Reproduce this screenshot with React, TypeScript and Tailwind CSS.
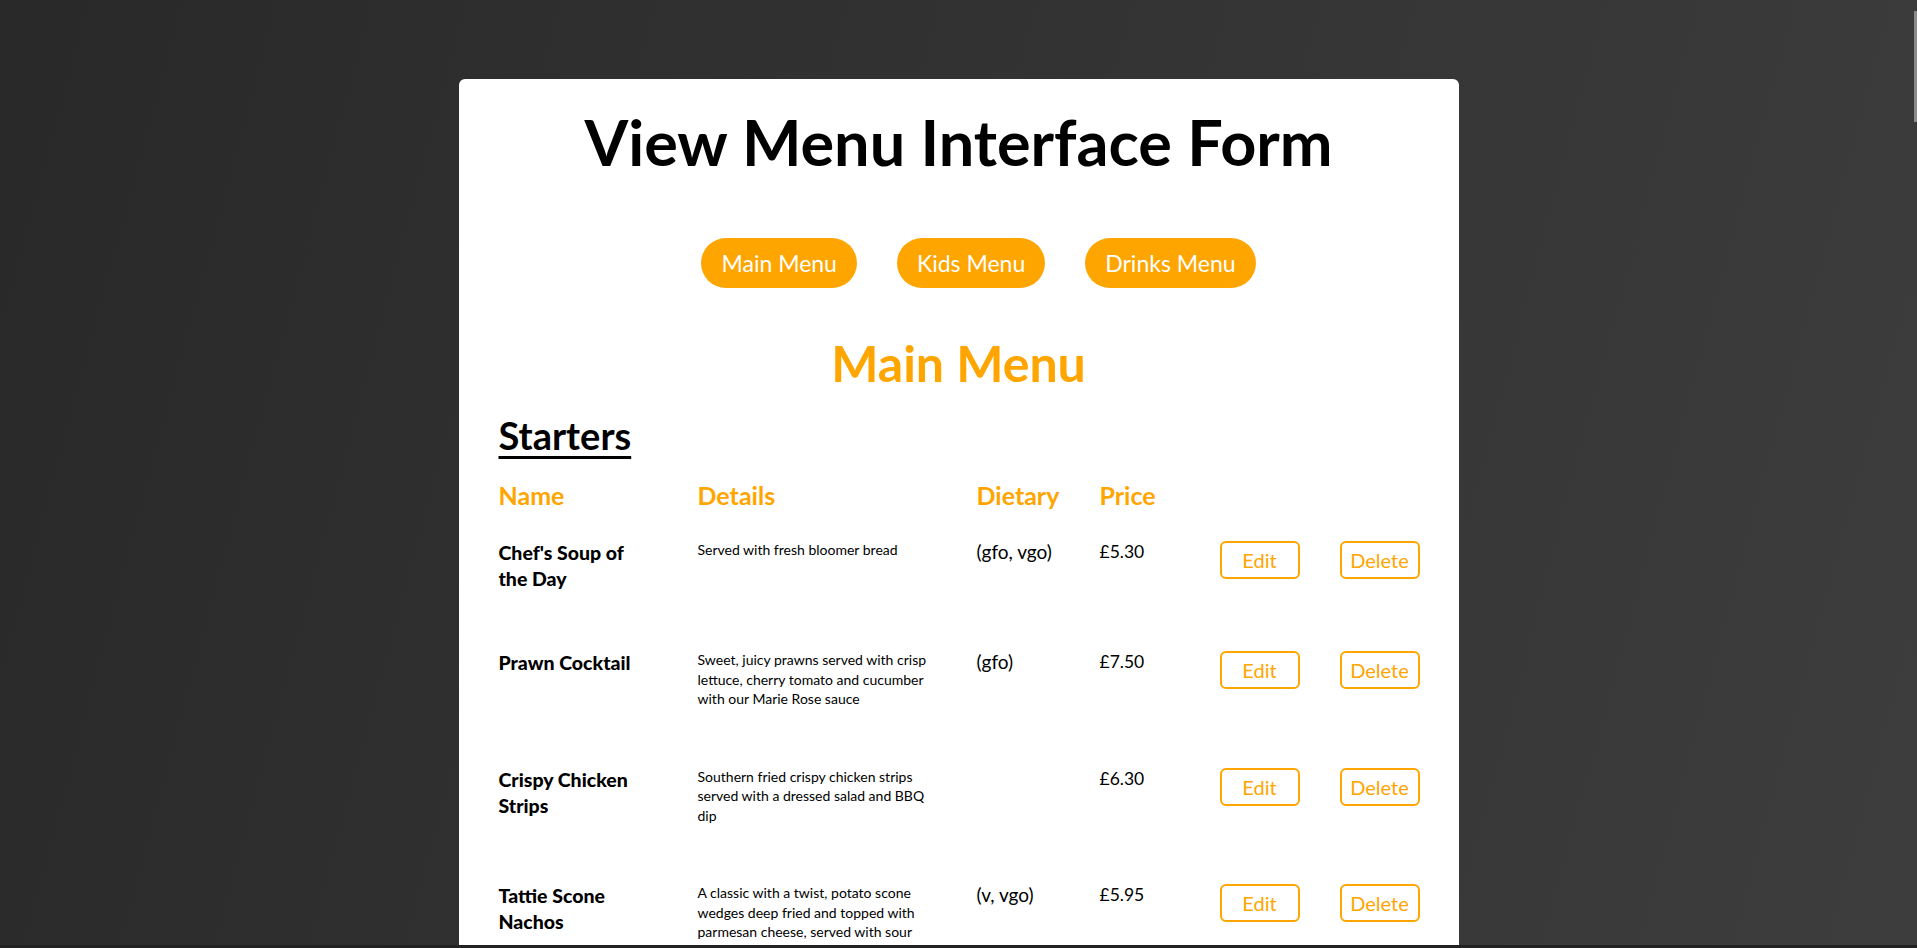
import React from 'react';

interface IMenuItem {
  name: string;
  details: string;
  dietary: string;
  price: string;
}

const starters: IMenuItem[] = [
  { name: "Chef's Soup of the Day", details: 'Served with fresh bloomer bread', dietary: '(gfo, vgo)', price: '£5.30' },
  {
    name: 'Prawn Cocktail',
    details: 'Sweet, juicy prawns served with crisp lettuce, cherry tomato and cucumber with our Marie Rose sauce',
    dietary: '(gfo)',
    price: '£7.50',
  },
  {
    name: 'Crispy Chicken Strips',
    details: 'Southern fried crispy chicken strips served with a dressed salad and BBQ dip',
    dietary: '',
    price: '£6.30',
  },
  {
    name: 'Tattie Scone Nachos',
    details: 'A classic with a twist, potato scone wedges deep fried and topped with parmesan cheese, served with sour cream and salsa',
    dietary: '(v, vgo)',
    price: '£5.95',
  },
];

const menus = ['Main Menu', 'Kids Menu', 'Drinks Menu'];

const App: React.FC = () => {
  return (
    <div className="relative h-screen overflow-hidden bg-[linear-gradient(105deg,#292929_0%,#333333_50%,#3d3d3d_100%)] font-['Lato',sans-serif]">
      <div className="mx-auto mt-[79px] w-[1000px] rounded-[6px] bg-white px-10 pt-[31px] pb-10">
        <h1 className="text-center text-[63px] font-bold leading-none text-black">View Menu Interface Form</h1>

        {/* Menu switcher */}
        <div className="mt-[65px] flex justify-center gap-10 pl-[40px]">
          {menus.map((m) => (
            <button key={m} className="h-[50px] rounded-full bg-[#ffa500] px-5 text-[23px] leading-none text-white">
              {m}
            </button>
          ))}
        </div>

        <h2 className="mt-[50px] text-center text-[50px] font-bold leading-none text-[#ffa500]">Main Menu</h2>

        <h3 className="mt-[28px] text-[38px] font-bold leading-none text-black underline decoration-[3px] underline-offset-[6px]">
          Starters
        </h3>

        {/* Table header */}
        <div className="mt-[29px] grid grid-cols-[199px_279px_123px_120px_120px_79px] text-[25px] font-bold leading-none text-[#ffa500]">
          <div>Name</div>
          <div>Details</div>
          <div>Dietary</div>
          <div>Price</div>
        </div>

        <div className="mt-[29px]">
          {starters.map((item) => (
            <div
              key={item.name}
              className="grid grid-cols-[199px_279px_123px_120px_120px_79px] items-start pb-[55px]"
            >
              <div className="mt-[3px] w-[145px] text-[19.5px] font-black leading-[26px] text-black">{item.name}</div>
              <div className="mt-[3px] w-[240px] text-[14px] leading-[19.5px] text-black">{item.details}</div>
              <div className="mt-[2px] text-[19px] leading-[26px] text-black">{item.dietary}</div>
              <div className="mt-[2px] text-[17.5px] leading-[26px] text-black">{item.price}</div>
              <div className="mt-[4px]">
                <button className="h-[38px] w-[80px] rounded-[6px] border-2 border-[#ffa500] bg-white text-[20px] leading-none text-[#ffa500]">
                  Edit
                </button>
              </div>
              <div className="mt-[4px]">
                <button className="h-[38px] w-[80px] rounded-[6px] border-2 border-[#ffa500] bg-white text-[20px] leading-none text-[#ffa500]">
                  Delete
                </button>
              </div>
            </div>
          ))}
        </div>
      </div>

      {/* thin scrollbar thumb and window edge */}
      <div className="absolute right-0 top-[11px] h-[111px] w-[3px] bg-[#8a8a8a]" />
      <div className="absolute bottom-0 left-0 h-[3px] w-full bg-[#222222]" />
    </div>
  );
};

export default App;
